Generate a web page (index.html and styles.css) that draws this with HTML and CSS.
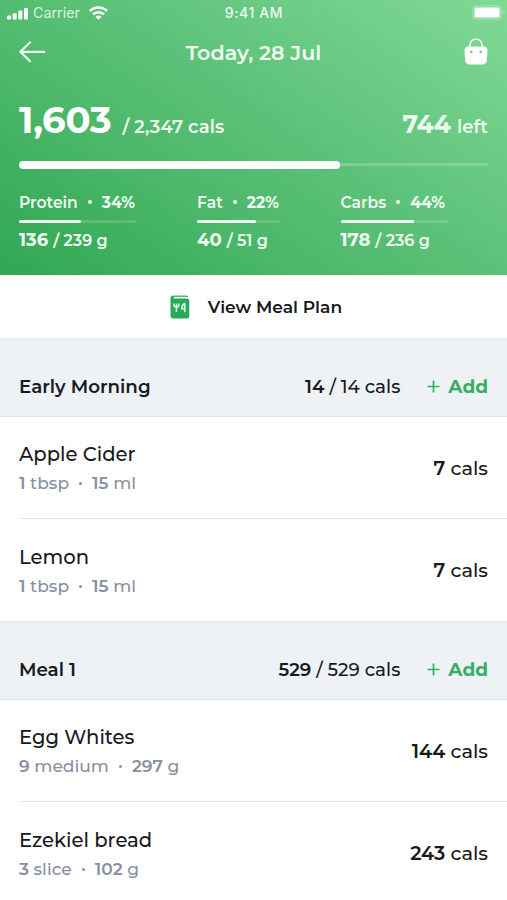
FILE: index.html
```html
<!DOCTYPE html>
<html lang="en">
<head>
<meta charset="utf-8">
<title>Meal diary</title>
<link rel="stylesheet" href="styles.css">
</head>
<body>
<header class="summary">
  <div class="status">
    <div class="status-left">
      <svg width="22" height="13" viewBox="0 0 22 13" fill="#fff"><rect x="0" y="8.500" width="4" height="4" rx="1"/><rect x="5.600" y="6.200" width="4" height="6.300" rx="1"/><rect x="11.300" y="3.400" width="4" height="9.100" rx="1"/><rect x="17" y="1" width="4" height="11.500" rx="1"/></svg>
      <span class="carrier">Carrier</span>
      <svg class="wifi" width="19" height="14" viewBox="0 0 19 14" fill="none" stroke="#fff" stroke-width="2.500"><path d="M.9 5a12.300 12.300 0 0 1 17.200 0"/><path d="M4 8.400a7.900 7.900 0 0 1 11 0"/><path d="M9.500 13.800 6.400 10.700a4.400 4.400 0 0 1 6.200 0Z" fill="#fff" stroke="none"/></svg>
    </div>
    <span class="time">9:41 AM</span>
    <svg class="battery" width="33" height="16" viewBox="0 0 33 16"><rect x=".7" y=".7" width="28.600" height="13.600" rx="3.400" fill="#fff" fill-opacity=".12" stroke="#fff" stroke-opacity=".2" stroke-width="1.200"/><rect x="2.500" y="2.600" width="25" height="9.800" rx="1.200" fill="#fff"/><path d="M31 5.200v5q2-.7 2-2.500t-2-2.500" fill="#fff" fill-opacity=".25"/></svg>
  </div>
  <nav class="nav">
    <svg width="27" height="22" viewBox="0 0 27 22" fill="none" stroke="#f2fff4" stroke-width="2.200" stroke-linecap="round" stroke-linejoin="round"><path d="M25.300 10.800H1.300M11 1.500 1.300 10.800l9.700 9.300"/></svg>
    <h1 class="title">Today, 28 Jul</h1>
    <svg width="24" height="28" viewBox="0 0 24 28"><path d="M6 10V7a6 6 0 0 1 12 0v3" fill="none" stroke="#eafbed" stroke-width="1.700"/><path d="M4.300 8.500h15.400Q23.600 8.500 23.400 13L22.900 21.500Q22.500 26.500 18.500 26.500H5.500Q1.500 26.500 1.100 21.500L.6 13Q.4 8.500 4.300 8.500Z" fill="#fff"/><circle cx="7.200" cy="13.800" r="1.400" fill="#98b89e"/><circle cx="16.800" cy="13.800" r="1.400" fill="#98b89e"/></svg>
  </nav>
  <div class="totals">
    <div class="eaten"><strong class="big">1,603</strong><span class="of">/ 2,347 cals</span></div>
    <div class="left"><strong class="remain">744</strong><span class="of">left</span></div>
  </div>
  <div class="progress"><div class="progress-fill"></div></div>
  <div class="macros">
    <div class="macro protein">
      <div class="macro-head"><span>Protein</span><i class="dot"></i><b>34%</b></div>
      <div class="bar"><div class="bar-fill"></div></div>
      <div class="macro-value"><b>136</b><span>/ 239 g</span></div>
    </div>
    <div class="macro fat">
      <div class="macro-head"><span>Fat</span><i class="dot"></i><b>22%</b></div>
      <div class="bar"><div class="bar-fill"></div></div>
      <div class="macro-value"><b>40</b><span>/ 51 g</span></div>
    </div>
    <div class="macro carbs">
      <div class="macro-head"><span>Carbs</span><i class="dot"></i><b>44%</b></div>
      <div class="bar"><div class="bar-fill"></div></div>
      <div class="macro-value"><b>178</b><span>/ 236 g</span></div>
    </div>
  </div>
</header>
<div class="plan">
  <svg width="20" height="24" viewBox="0 0 20 24"><path d="M.5 3.500Q.5.500 3.500.500H16.500q1.500 0 1.800 1.500H3.500v2Z" fill="#49b975"/><path d="M.5 3Q1 1 3.500 1L3.800 3.400H17q2.300 0 2.300 2.300V21q0 2.500-2.500 2.500H3.500Q.5 23.500.5 20.500Z" fill="#27a85a"/><path d="M4 8.500v1.300q0 2.500 2.400 2.500t2.400-2.500V8.500M6.400 8.500V17M14.800 17.300V8.500q-3 1.800-3.200 5.200h3.200" fill="none" stroke="#d9f5e2" stroke-width="1.500"/></svg>
  <span class="plan-label">View Meal Plan</span>
</div>
<section>
  <div class="meal">
    <h2 class="meal-name">Early Morning</h2>
    <div class="meal-cals"><b>14</b><span>/ 14 cals</span></div>
    <div class="add"><svg width="13" height="13" viewBox="0 0 13 13" stroke="#38ad67" stroke-width="1.700"><path d="M6.500.5v12M.5 6.500h12"/></svg><span>Add</span></div>
  </div>
  <div class="food">
    <div><div class="food-name">Apple Cider</div><div class="food-info"><b>1</b> tbsp<i class="dot"></i><b>15</b> ml</div></div>
    <div class="food-cals"><b>7</b> cals</div>
  </div>
  <div class="food last">
    <div><div class="food-name">Lemon</div><div class="food-info"><b>1</b> tbsp<i class="dot"></i><b>15</b> ml</div></div>
    <div class="food-cals"><b>7</b> cals</div>
  </div>
</section>
<section>
  <div class="meal">
    <h2 class="meal-name">Meal 1</h2>
    <div class="meal-cals"><b>529</b><span>/ 529 cals</span></div>
    <div class="add"><svg width="13" height="13" viewBox="0 0 13 13" stroke="#38ad67" stroke-width="1.700"><path d="M6.500.5v12M.5 6.500h12"/></svg><span>Add</span></div>
  </div>
  <div class="food">
    <div><div class="food-name">Egg Whites</div><div class="food-info"><b>9</b> medium<i class="dot"></i><b>297</b> g</div></div>
    <div class="food-cals"><b>144</b> cals</div>
  </div>
  <div class="food last">
    <div><div class="food-name">Ezekiel bread</div><div class="food-info"><b>3</b> slice<i class="dot"></i><b>102</b> g</div></div>
    <div class="food-cals"><b>243</b> cals</div>
  </div>
</section>
</body>
</html>
```
FILE: styles.css
```css
* { box-sizing: border-box; }
body {
  margin: 0;
  width: 507px;
  height: 900px;
  overflow: hidden;
  background: #fff;
  color: #17191c;
  font-family: Montserrat, Inter, "Liberation Sans", sans-serif;
}
svg { display: block; flex: none; }
b, strong { font-weight: 700; }
.summary {
  height: 275px;
  padding: 0 19px;
  color: #effcf1;
  background: linear-gradient(34deg, #30a753 0%, #5ac076 52%, #80d996 100%);
}
.status {
  display: grid;
  grid-template-columns: 1fr auto 1fr;
  align-items: center;
  height: 26px;
  margin: 0 -12px;
  font-family: Inter, sans-serif;
}
.status-left { display: flex; align-items: center; }
.carrier { margin-left: 4px; font-size: 14.3px; line-height: 26px; opacity: .85; }
.wifi { margin-left: 9px; }
.time { padding-left: 1px; font-size: 14px; line-height: 26px; font-weight: 500; letter-spacing: .6px; }
.battery { justify-self: end; margin-right: -5px; }
.nav { display: flex; align-items: center; justify-content: space-between; height: 52px; }
.title { margin: 0 3px 0 0; font-size: 20.7px; font-weight: 600; }
.totals { display: flex; justify-content: space-between; align-items: baseline; height: 82px; padding-top: 20px; }
.big { font-size: 37px; line-height: 44px; letter-spacing: -.3px; color: #fff; }
.of { font-size: 18px; font-weight: 600; }
.eaten .of { margin-left: 11px; letter-spacing: .12px; }
.remain { font-size: 25px; }
.left .of { margin-left: 6px; letter-spacing: .1px; }
.progress {
  display: flex;
  align-items: center;
  height: 9px;
  background: linear-gradient(#fff3, #fff3) center / 100% 3px no-repeat;
}
.progress-fill { width: 321px; height: 8px; border-radius: 4px; background: #fff; }
.macros { display: grid; grid-template-columns: 178px 143.5px auto; justify-items: start; padding-top: 22px; }
.macro-head { display: flex; align-items: center; height: 22px; font-size: 15.6px; font-weight: 600; }
.dot { display: inline-block; width: 4px; height: 4px; border-radius: 50%; background: currentColor; }
.macro-head .dot { margin: 0 10px; }
.bar { height: 3px; margin-top: 7px; background: #ffffff26; border-radius: 1.5px; }
.bar-fill { height: 3px; background: #effcf1; border-radius: 1.5px; }
.protein .bar { width: 118px; }
.protein .bar-fill { width: 62px; }
.fat .bar { width: 83px; }
.fat .bar-fill { width: 59px; }
.carbs .bar { width: 107px; }
.carbs .bar-fill { width: 73px; }
.macro-value { display: flex; align-items: baseline; gap: 5px; margin-top: 6px; line-height: 22px; font-size: 16px; font-weight: 600; }
.macro-value b { font-size: 18px; }
.plan { display: flex; align-items: center; justify-content: center; gap: 18px; height: 63px; padding-left: 5px; }
.plan-label { font-size: 17.1px; font-weight: 600; }
.meal {
  display: flex;
  align-items: center;
  height: 79px;
  padding: 18px 19px 0;
  background: #eef2f5;
  border-top: 1px solid #e4e8eb;
  border-bottom: 1px solid #e2e6e9;
}
.meal-name { flex: 1; margin: 0; font-size: 18.3px; font-weight: 600; }
.meal-cals { font-size: 18.3px; font-weight: 500; }
.meal-cals b { font-weight: 600; margin-right: 5px; }
.add { display: flex; align-items: center; gap: 8px; margin-left: 27px; color: #38ad67; font-size: 18.5px; font-weight: 700; }
.food {
  display: flex;
  align-items: center;
  justify-content: space-between;
  height: 102px;
  margin-left: 19px;
  padding-right: 19px;
  border-bottom: 1px solid #e7e9eb;
}
.last { border-bottom: 0; }
.food-name { font-size: 19.6px; line-height: 28px; font-weight: 500; }
.food-info { margin-top: 3px; font-size: 17.1px; line-height: 24px; font-weight: 500; color: #8790a2; }
.food-info b { font-weight: 600; }
.food-info .dot { width: 3px; height: 3px; margin: 0 10px; vertical-align: 4px; }
.food-cals { font-size: 19.3px; font-weight: 500; }
.food-cals b { font-weight: 600; }
```
